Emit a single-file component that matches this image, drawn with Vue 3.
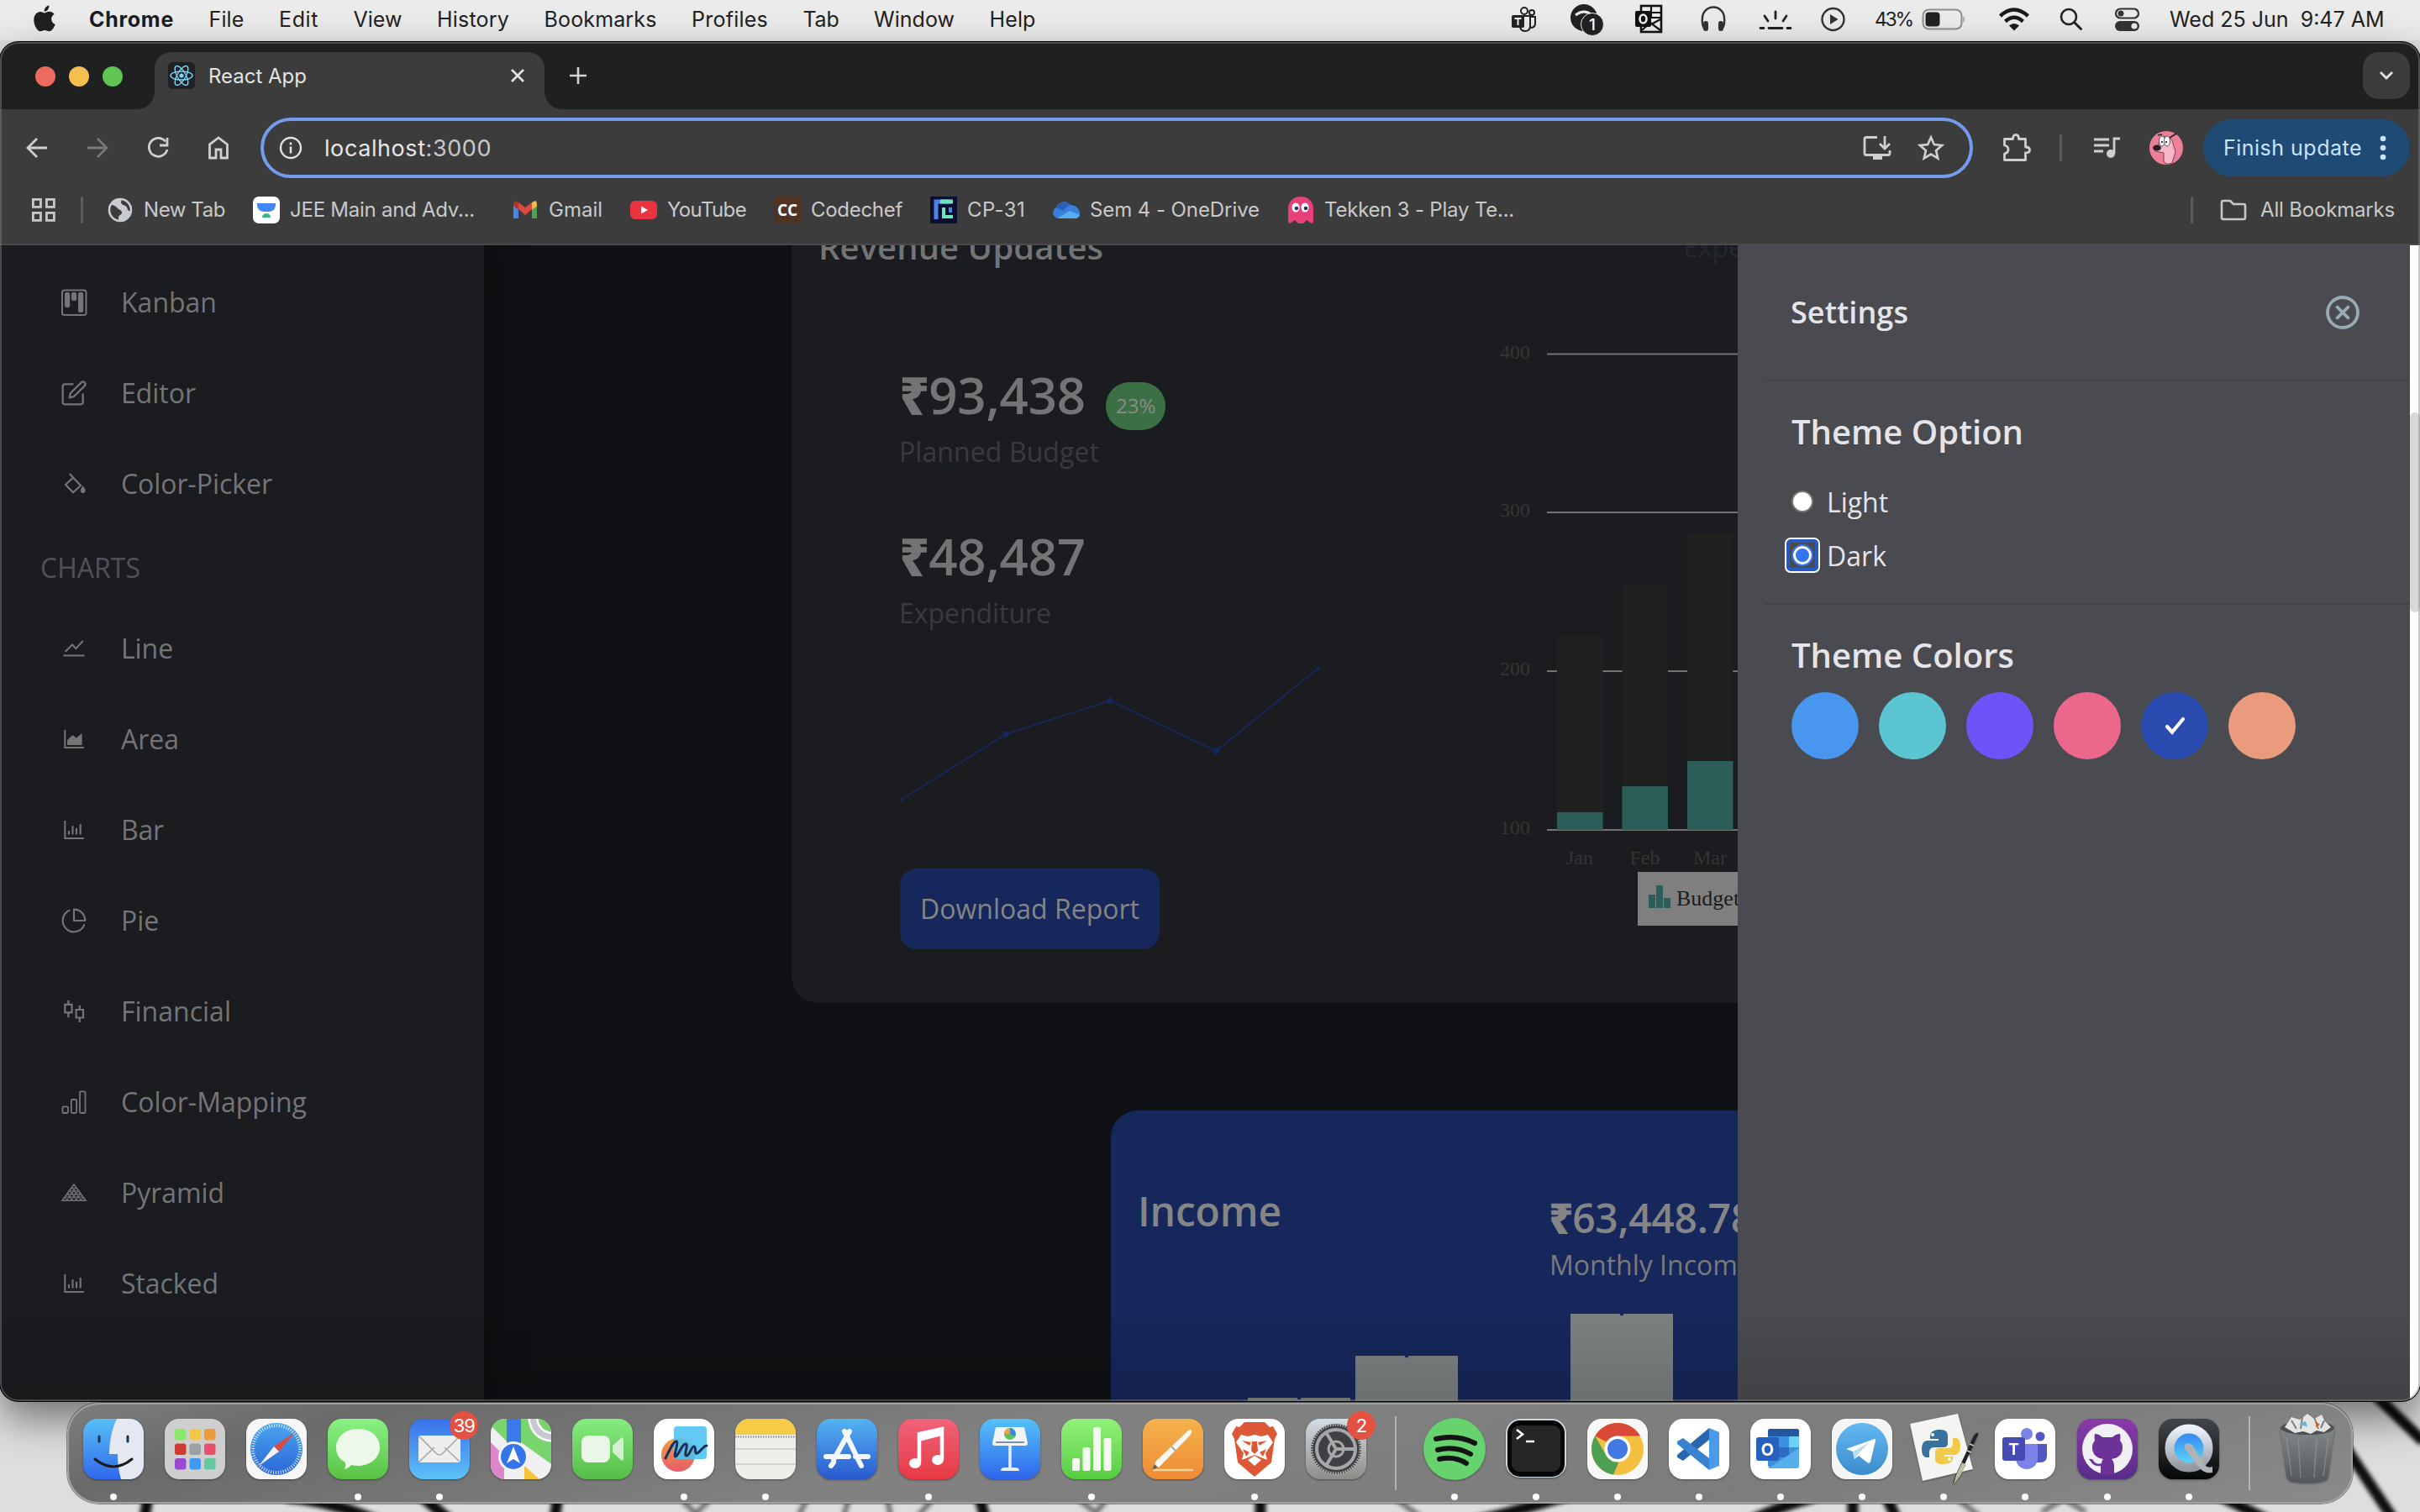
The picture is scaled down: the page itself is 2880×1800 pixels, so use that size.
<script setup>
// Spreads a label over its measured width by adjusting the tracking.
const vFit = {
  mounted(el, { value }) {
    const w = el.getBoundingClientRect().width
    const n = el.textContent.trim().length
    el.style.letterSpacing = (value - w) / n + 'px'
  },
}

const menus = [
  ['File', 42], ['Edit', 47], ['View', 58], ['History', 86], ['Bookmarks', 134],
  ['Profiles', 91], ['Tab', 43], ['Window', 96], ['Help', 55],
]

const bookmarks = [
  { label: 'New Tab', w: 97, icon: '<circle cx="16" cy="16" r="14" fill="#c7cace"/><path d="M5 10c4 0 6 2 8 4s5 2 5 5-4 3-4 6 1 4 0 5C6 29 2 22 2.500 15z" fill="#3c3c3c"/><path d="M19 3c-2 2-3 4-1 6s5 1 6 4 2 5 5 4c1-7-4-13-10-14z" fill="#3c3c3c"/><circle cx="16" cy="16" r="13" fill="none" stroke="#c7cace" stroke-width="2.500"/>' },
  { label: 'JEE Main and Adv...', w: 220, gap: 44, icon: '<rect width="32" height="32" rx="7" fill="#fff"/><path d="M5 8h22v2c0 5-4 8-8 8h-6c-4 0-8-3-8-8z" fill="#4285f4"/><path d="M11 25c0-3 2-5 5-5s5 2 5 5z" fill="#3cba7c"/>' },
  { label: 'Gmail', w: 64, icon: '<path d="M2 8v18h6V13z" fill="#4a86e8"/><path d="M30 8v18h-6V13z" fill="#4fa355"/><path d="M24 7l4-2q2 1 2 4v2l-6 5z" fill="#f2bd42"/><path d="M8 7L4 5Q2 6 2 9v2l6 5z" fill="#b5322a"/><path d="M8 7l8 6 8-6v8l-8 7-8-7z" fill="#dc4a3d"/>' },
  { label: 'YouTube', w: 94, icon: '<rect y="5" width="32" height="22" rx="6" fill="#ea3340"/><path d="M13 11.500v9l8-4.500z" fill="#fff"/>' },
  { label: 'Codechef', w: 109, icon: '<rect width="32" height="32" fill="#4f3324"/><text x="16" y="22.500" text-anchor="middle" font-family="Open Sans, sans-serif" font-weight="700" font-size="19" fill="#fff">CC</text>' },
  { label: 'CP-31', w: 69, icon: '<rect width="32" height="32" fill="#0b0f2e"/><path d="M7 27V6h17" fill="none" stroke="#4a86e8" stroke-width="5"/><path d="M12 6h15" stroke="#6be6c0" stroke-width="5"/><path d="M16 13v11h11" fill="none" stroke="#6be6c0" stroke-width="4"/><path d="M22 13h4v6h-4z" fill="#4a86e8"/>' },
  { label: 'Sem 4 - OneDrive', w: 202, icon: '<path d="M6 26a7 7 0 0 1-2-13C6 7 15 3 21 10c6 0 10 4 11 9s-3 7-5 7z" fill="#3b7fdc"/><path d="M4 13c3-7 13-9 17-3-4 1-7 4-9 7z" fill="#2b5fb5"/><path d="M5 26l15-9 12 5q-2 4-5 4z" fill="#56aef0"/>' },
  { label: 'Tekken 3 - Play Te...', w: 226, icon: '<path d="M1 30V14a15 14 0 0 1 30 0v16q0 3-4 1l-4-3-4 4h-6l-4-4-4 3q-4 2-4-1z" fill="#e8407a"/><ellipse cx="10" cy="13" rx="4.500" ry="5.500" fill="#fff"/><ellipse cx="21" cy="13" rx="4.500" ry="5.500" fill="#fff"/><circle cx="11" cy="14" r="2.300" fill="#25305c"/><circle cx="22" cy="14" r="2.300" fill="#25305c"/>' },
]

const barIcon = '<path d="M5.300 5v21h22.600" stroke-width="2"/><path d="M10 17v4.500M14.500 11.300v10.200M19 14v7.500M23.700 9v12.500" stroke-width="2.100"/>'
const apps = [
  { label: 'Kanban', w: 114, icon: '<rect x="2" y="1.500" width="28.500" height="29.500" rx="2.500" stroke-width="2"/><g fill="currentColor" stroke="none"><rect x="5" y="4" width="6.200" height="18" rx="2"/><rect x="13" y="4" width="6.200" height="10" rx="2"/><rect x="21" y="4" width="6.200" height="24" rx="2"/></g>' },
  { label: 'Editor', w: 89, icon: '<g transform="scale(1.333)" stroke-width="1.700" stroke-linecap="round" stroke-linejoin="round"><path d="M11 4H4a2 2 0 0 0-2 2v14a2 2 0 0 0 2 2h14a2 2 0 0 0 2-2v-7"/><path d="M18.500 2.500a2.121 2.121 0 0 1 3 3L12 15l-4 1 1-4 9.500-9.500z"/></g>' },
  { label: 'Color-Picker', w: 180, icon: '<path d="M11 4l4 4.500L24 18l-9 8.300L6 17l9-8.500" stroke-width="2.200"/><path d="M26.700 18q6 8 0 9.300-6-1.300 0-9.300z" fill="currentColor" stroke="none"/>' },
]
const charts = [
  { label: 'Line', w: 62, icon: '<path d="M5.700 19.800l8.400-8.300 4.200 4.600L26.700 7" stroke-width="2"/><path d="M3.300 24.400h25.400" stroke-width="2"/>' },
  { label: 'Area', w: 69, icon: '<path d="M5.300 5v21h22.600" stroke-width="2"/><path d="M8 23v-6l6.500-6 4.200 3.600L25.600 9v14z" fill="currentColor" stroke="none"/>' },
  { label: 'Bar', w: 51, icon: barIcon },
  { label: 'Pie', w: 45, icon: '<g transform="scale(1.333)" stroke-width="1.600" stroke-linecap="round" stroke-linejoin="round"><path d="M21.210 15.890A10 10 0 1 1 8 2.830"/><path d="M22 12A10 10 0 0 0 12 2v10z"/></g>' },
  { label: 'Financial', w: 131, icon: '<path d="M5.300 7.800h8.200v9.600H5.300zM9.400 2.800v5M9.400 17.400v5.800M18.600 14h8.400v9.500h-8.400zM22.800 9v5M22.800 23.500V29" stroke-width="2.200"/>' },
  { label: 'Color-Mapping', w: 221, icon: '<g stroke-width="1.800"><rect x="2.500" y="21.300" width="6.500" height="7.700" rx="1.500"/><rect x="12.800" y="13" width="6.300" height="16" rx="1.500"/><rect x="23" y="3.300" width="6.500" height="25.700" rx="1.500"/></g>' },
  { label: 'Pyramid', w: 123, icon: '<path d="M16 6L2 25.300h28z" stroke-width="1.600"/><path d="M13 10.500h6M10.500 14h11M8 17.500h16M5.500 21h21M13.500 10l11 15M11 13.500l8.500 11.500M8 17l6 8M5 21l3 4M18.500 10l-11 15M21 13.500L12.500 25M24 17l-6 8M27 21l-3 4" stroke-width="1.200"/>' },
  { label: 'Stacked', w: 116, icon: barIcon },
]

const months = [
  { x: 1853, top: 757.500, green: 967, label: 'Jan' },
  { x: 1930.500, top: 696, green: 936, label: 'Feb' },
  { x: 2008, top: 635, green: 906, label: 'Mar' },
]
const grid = [[400, 421.500], [300, 610], [200, 799], [100, 988]]
const income = [[1485, 1664], [1613, 1614], [1869, 1564]]
const themes = ['#4896ee', '#5cc5d2', '#7053f8', '#eb678c', '#2a4bb0', '#ea9b7e']

const tile = (f) => `<rect width="72" height="72" rx="17" fill="${f}"/>`
const g = (id, a, b) => `<defs><linearGradient id="${id}" x1="0" y1="0" x2="0" y2="1"><stop offset="0" stop-color="${a}"/><stop offset="1" stop-color="${b}"/></linearGradient></defs>`
const pads = ['#8be868', '#f4c648', '#ee9a3a', '#cf3b30', '#9aa0a3', '#e8506a', '#9a4bd0', '#3f9af4', '#64c9a0']
const teeth = '<circle cx="36" cy="36" r="28" fill="none" stroke="#dff0ff" stroke-width="4" stroke-dasharray="1 1.930"/>'

const left = [
  { n: 'finder', dot: 1, i: g('fi', '#58bff5', '#2f68ec') + '<clipPath id="fc"><rect width="72" height="72" rx="17"/></clipPath><g clip-path="url(#fc)"><rect width="72" height="72" fill="url(#fi)"/><path d="M40 0c-6 12-9 28-9 42h10c0 10 1 20 4 30h27V0z" fill="#e4e8f0"/></g><path d="M19 21v6M53 21v6" stroke="#16324f" stroke-width="3" stroke-linecap="round"/><path d="M14 48q22 18 44 0" fill="none" stroke="#1b1b1b" stroke-width="3" stroke-linecap="round"/>' },
  { n: 'launchpad', i: tile('#cfcfd0') + pads.map((c, k) => `<rect x="${12 + (k % 3) * 17.500}" y="${12 + Math.floor(k / 3) * 17.500}" width="13.500" height="13.500" rx="3" fill="${c}"/>`).join('') },
  { n: 'safari', i: g('sa', '#4aa5ee', '#2b65d8') + tile('#f6f6f6') + '<circle cx="36" cy="36" r="31" fill="url(#sa)"/>' + teeth + '<path d="M58 16L39 39l-6-6z" fill="#e04a3c"/><path d="M15 56l18-23 6 6z" fill="#f4f4f4"/>' },
  { n: 'messages', dot: 1, i: g('me', '#8af284', '#58c144') + tile('url(#me)') + '<path d="M36 12c16 0 26 10 26 22S51 56 36 56q-4 0-8-1-3 4-8 5 2-4 1-8C13 48 10 41 10 34c0-12 11-22 26-22z" fill="#eef8ea"/>' },
  { n: 'mail', dot: 1, badge: '39', i: g('ma', '#3a70ea', '#5cc2f8') + tile('url(#ma)') + '<rect x="11" y="20" width="50" height="32" rx="3" fill="#eeeeee"/><path d="M12 51l18-17M60 51L42 34M12 21l20 20q4 4 8 0l20-20" fill="none" stroke="#a9a9a9" stroke-width="1.600"/>' },
  { n: 'maps', i: '<clipPath id="mc"><rect width="72" height="72" rx="17"/></clipPath><g clip-path="url(#mc)"><rect width="72" height="72" fill="#f0f0f2"/><path d="M0 0h20v28L0 8zM36 0h36v54L36 28z" fill="#79d36f"/><path d="M0 28l16 16v28H0z" fill="#dd86cb"/><path d="M40 72V56l18 16z" fill="#f2c53d"/><path d="M50-2q2 22 24 24" fill="none" stroke="#fff" stroke-width="12"/><path d="M50-2q2 22 24 24" fill="none" stroke="#c8c8d0" stroke-width="7"/><path d="M19 0h17v40H19z" fill="#3b78ea"/></g><circle cx="27" cy="45" r="18" fill="#f4f4f6"/><circle cx="27" cy="45" r="15" fill="#3475ea"/><path d="M27 33l8 20-8-5-8 5z" fill="#fff"/>' },
  { n: 'facetime', i: g('ft', '#86ec80', '#56bd47') + tile('url(#ft)') + '<rect x="11" y="20" width="34" height="32" rx="8" fill="#eaf6e6"/><path d="M48 32l10-9q3-2 3 2v22q0 4-3 2l-10-9z" fill="#d6efd0"/>' },
  { n: 'freeform', dot: 1, i: g('fr', '#f0a03c', '#e85c6c') + tile('#fff') + '<circle cx="29" cy="43" r="20" fill="url(#fr)"/><rect x="24" y="9" width="39" height="39" rx="4" fill="#4cc3f0" opacity=".88"/><path d="M14 47c5-10 10-21 13-20s-4 18-1 18 8-16 12-15-3 14 1 14 6-12 9-11 0 10 4 8 7-9 11-9" fill="none" stroke="#15305c" stroke-width="3" stroke-linecap="round"/>' },
  { n: 'notes', dot: 1, i: '<clipPath id="nc"><rect width="72" height="72" rx="17"/></clipPath><g clip-path="url(#nc)"><rect width="72" height="72" fill="#efeeea"/><rect width="72" height="19" fill="#f6cb45"/><path d="M0 21.500h72" stroke="#8c8a84" stroke-width="2" stroke-dasharray="1.500 1.500"/><path d="M0 36h72M0 54h72" stroke="#cbc9c4" stroke-width="1.500"/></g>' },
  { n: 'appstore', i: g('as', '#54b4f2', '#2a58cf') + tile('url(#as)') + '<path d="M39 15L20 49M33 15l20 41M17 56l3-4M11 45h27M46 45h15" stroke="#f4f8fc" stroke-width="6" stroke-linecap="round"/>' },
  { n: 'music', dot: 1, i: g('mu', '#f0637a', '#e63a44') + tile('url(#mu)') + '<path d="M25 52V18l27-6v36" fill="none" stroke="#fff" stroke-width="4.500"/><path d="M25 18l27-6v8l-27 7z" fill="#fff"/><ellipse cx="20" cy="53" rx="7" ry="6" fill="#fff"/><ellipse cx="47" cy="49" rx="7" ry="6" fill="#fff"/>' },
  { n: 'keynote', i: g('ke', '#55c1f8', '#2f66ec') + tile('url(#ke)') + '<path d="M19 10h34l4 19q0 3-3 3H18q-3 0-3-3z" fill="#f3f4f6"/><path d="M19 28h34" stroke="#7a93b0" stroke-width="2"/><circle cx="36" cy="18" r="7" fill="#5cc065"/><path d="M36 11a7 7 0 0 1 6 10l-6-3z" fill="#3f87e0"/><path d="M36 11a7 7 0 0 0-7 7h7z" fill="#f2a23a"/><path d="M36 32v28" stroke="#e7edf4" stroke-width="3.500"/><path d="M25 62q0-4 5-4h12q5 0 5 4z" fill="#e7edf4"/>' },
  { n: 'numbers', dot: 1, i: g('nu', '#92f07a', '#57cc41') + tile('url(#nu)') + '<g fill="#f3fbf0"><rect x="13" y="47" width="9" height="15" rx="2"/><rect x="25.500" y="34" width="9" height="28" rx="2"/><rect x="38" y="10" width="9" height="52" rx="2"/><rect x="50.500" y="23" width="9" height="39" rx="2"/></g>' },
  { n: 'pages', i: g('pa', '#f5b34c', '#ee8a35') + tile('url(#pa)') + '<path d="M12 61h48" stroke="#f9d3a0" stroke-width="2.500"/><path d="M11 61l5-11L52 16q5-5 6-2t-3 7L20 57z" fill="#f6f6f4"/><path d="M11 61l3-7 4 4z" fill="#6b5a48"/><path d="M34 33l5 5" stroke="#a8a39a" stroke-width="2"/>' },
  { n: 'brave', dot: 1, i: tile('#fff') + '<path d="M24 4h24l6 6 4-1 5 9-3 6-4 28-14 12-6 5-6-5-14-12-4-28-3-6 5-9 4 1z" fill="#dc5836"/><path d="M20 19l8 2 8-2 8 2 8-2 6 9-9 13 2 8-15-6-15 6 2-8-9-13z" fill="#fff"/><path d="M21 26l11 2-2 4zM51 26l-11 2 2 4zM33 27h6l1 11-4 4-4-4zM22 36l8 4-4 5zM50 36l-8 4 4 5z" fill="#dc5836"/><path d="M28 49l8-5 8 5-8 7z" fill="#fff"/>' },
  { n: 'settings', badge: '2', i: g('se', '#d4dde4', '#8d8c88') + tile('url(#se)') + '<circle cx="36" cy="36" r="30" fill="#3e4043"/><circle cx="36" cy="36" r="29" fill="none" stroke="#b4b4b4" stroke-width="3" stroke-dasharray="1.500 1.500"/><circle cx="36" cy="36" r="23" fill="none" stroke="#a6a7a8" stroke-width="4"/><circle cx="36" cy="36" r="9" fill="none" stroke="#a6a7a8" stroke-width="3"/><path d="M36 36h23M36 36L24 16M36 36L24 56" stroke="#a6a7a8" stroke-width="4"/>' },
]
const right = [
  { n: 'spotify', i: '<circle cx="36" cy="36" r="37" fill="#66d36e"/><path d="M14 24q25-6 46 5M16 37q21-5 39 5M18 48q18-4 32 5" fill="none" stroke="#141414" stroke-width="6" stroke-linecap="round"/>' },
  { n: 'terminal', i: '<rect width="72" height="70" rx="17" fill="#c9d6dc"/><rect x="2" y="2" width="68" height="67" rx="15" fill="#050505"/><rect x="7" y="8" width="58" height="55" rx="9" fill="#262626"/><path d="M13 13l7 5.500-7 5.500M24 27h10" fill="none" stroke="#fff" stroke-width="2.600"/>' },
  { n: 'chrome', i: tile('#f8f8f8') + '<circle cx="36" cy="36" r="31" fill="#f3bf3e"/><path d="M36 5a31 31 0 0 1 27 15.500H36a15.500 15.500 0 0 0-13 7L9.200 20.500A31 31 0 0 1 36 5z" fill="#d9493a"/><path d="M9.200 20.500L22.600 43.700q5 8.500 15 7.500L31 66.600A31 31 0 0 1 9.200 20.500z" fill="#4c9f53"/><circle cx="36" cy="36" r="15.500" fill="#fff"/><circle cx="36" cy="36" r="12" fill="#4178e2"/>' },
  { n: 'vscode', i: tile('#fff') + '<path d="M48 11l12 5v40l-12 5z" fill="#4b9ae9"/><path d="M48 11v14L17 50l-7-4v-3z" fill="#2a66ad"/><path d="M48 61V47L17 23l-7 4v3z" fill="#3a82cf"/>' },
  { n: 'outlook', i: tile('#fff') + '<rect x="21" y="12" width="37" height="46" rx="3" fill="#3c8fdc"/><path d="M21 15q0-3 3-3h31q3 0 3 3v6H21z" fill="#2557a0"/><path d="M46 21h12v13H46z" fill="#6cd0f7"/><path d="M34 34h12v12H34z" fill="#2e6cc0"/><path d="M21 59l37-24v21q0 3-3 3z" fill="#56aeea"/><rect x="7" y="22" width="27" height="28" rx="3" fill="#2560bd"/><text x="20.500" y="43.500" text-anchor="middle" font-family="Inter, sans-serif" font-weight="700" font-size="20" fill="#fff">O</text>' },
  { n: 'telegram', i: g('te', '#62b8f2', '#3c8ccb') + tile('#f5f5f6') + '<circle cx="36" cy="36" r="31" fill="url(#te)"/><path d="M17 36l34-12q2 0 1 2l-6 25q-1 3-4 1l-10-8-5 4-2-9z" fill="#fff"/><path d="M25 39l20-11-14 14-4 6z" fill="#bcdcf1"/>' },
  { n: 'python', i: '<path d="M-4 6L53-6l18 66L11 74z" fill="#f4f4f2"/><path d="M30 13q11-1 11 7v9q0 5-5 5H25q-6 0-6 6v6h-4q-5-1-5-10t6-10h14v-2H20v-4q0-6 10-7z" fill="#39719f"/><path d="M37 54q-11 1-11-6v-8q0-5 5-5h11q5 0 5-6v-6h4q5 1 5 10t-6 10H37v2h10v3q0 5-10 6z" fill="#f1ca4a"/><circle cx="23" cy="19" r="2" fill="#fff"/><circle cx="43" cy="48" r="2" fill="#fff"/><path d="M77 19q1-3-2-2l-3 3-22 48-3 10 7-8z" fill="#20222c"/><path d="M58 52l-7 15-3 11 7-9 8-14z" fill="#c2bba4"/><path d="M64 38l5 2M67 30l5 2" stroke="#d5cfae" stroke-width="1.500"/>' },
  { n: 'teams', i: tile('#fff') + '<circle cx="38" cy="18" r="7" fill="#7c83e8"/><circle cx="54" cy="21" r="5.500" fill="#5258c0"/><path d="M48 30h14v14q0 8-8 8h-6z" fill="#5258c0"/><path d="M25 30h26v17a13 13 0 0 1-26 0z" fill="#7b83eb"/><rect x="9" y="22" width="27" height="28" rx="3" fill="#474cb4"/><text x="22.500" y="43" text-anchor="middle" font-family="Inter, sans-serif" font-weight="700" font-size="19" fill="#fff">T</text>' },
  { n: 'github', i: g('gi', '#8a3aaa', '#572d88') + tile('url(#gi)') + '<circle cx="36" cy="36" r="30" fill="#f0eff4"/><path d="M28 66V56q-8 1-11-4l-3-4q4-1 6 3 3 4 9 2 0-3 2-5-13-2-13-14 0-5 3-8-1-4 0-8 5 0 9 4h12q4-4 9-4 1 4 0 8 3 3 3 8 0 12-13 14 3 3 3 7v11z" fill="#6d3296"/>' },
  { n: 'quicktime', i: g('qt', '#43474c', '#060606') + g('qb', '#2f7df0', '#5fe0f8') + g('qr', '#eaf0fc', '#94999f') + tile('url(#qt)') + '<circle cx="36" cy="35" r="23" fill="url(#qb)" stroke="url(#qr)" stroke-width="11"/><path d="M32 30q6-2 9 3l14 22q3 4 9 2v7q-9 2-15-5L32 37q-3-4 0-7z" fill="#aeb3b8"/>' },
]
const trash = g('tr', '#84898c', '#54585c') + '<path d="M4 12l7 56q1 6 8 7 17 3 34 0 7-1 8-7l7-56z" fill="url(#tr)" opacity=".95"/><path d="M11 22l6 46M61 22l-6 46M25 24l3 46M47 24l-3 46" stroke="#9da2a5" stroke-width="1.500" opacity=".5"/><ellipse cx="36" cy="11" rx="32" ry="8" fill="#4c5053"/><path d="M9 10l8-12 10 3 9-7 8 6 9-5 4 8 7 7-8 6-9-2-7 4-9-3-10 2z" fill="#e4e4e2"/><path d="M17 2l6 10M30-2l-2 14M44-2l5 14M56 2l-4 9" stroke="#7e7f80" stroke-width="2"/><path d="M26 6l8-3 2 7z" fill="#64b8d0"/><path d="M46 3l5 4-5 3z" fill="#b56a35"/>'
</script>

<template>
  <div class="desktop">
    <svg class="wallpaper" viewBox="0 0 2880 1800" aria-hidden="true">
      <g class="ink">
        <path d="M178 1770l-8 50M340 1782q70 8 120 34M500 1780l36 30M664 1780l-4 30M1165 1780l8 30M1500 1780v30M1750 1812q60-14 130-36M2080 1812q30-16 80-30M2205 1780v30M2244 1780l14 30M2640 1780l60 30M2828 1662l56 54M2792 1724l56 84" stroke="#0d0d0d" stroke-width="13" />
        <path d="M812 1786l16 16 16-16M960 1785l-10 20M1010 1785l-6 20M1056 1785l4 20M1110 1785l-18 20M1284 1785l20 16 16-20M1662 1785l30 22M2330 1785l26 20M2430 1800l26-16 26 16" stroke="#6d6d6d" stroke-width="6" />
      </g>
    </svg>

    <header class="menubar">
      <svg class="apple" viewBox="0 0 26 32"><path d="M18.500.500q.300 3-1.700 5.200T12.600 7.800q-.300-2.800 1.700-5T18.500.500zM13 9.400c1.300 0 3-1.600 5.800-1.600 2.200 0 4.400 1.100 5.700 3.100-5 2.900-4.200 9.900 1.200 12-1.300 3.500-4 8.300-6.900 8.300-2.100 0-2.900-1.300-5.500-1.300s-3.500 1.300-5.500 1.300C4.600 31.200.300 24.300.300 17.700c0-6.400 4-9.800 7.700-9.800 2.400 0 3.800 1.500 5 1.500z" fill="#202020" /></svg>
      <b v-fit="101">Chrome</b>
      <span v-for="m in menus" :key="m[0]" v-fit="m[1]">{{ m[0] }}</span>
      <div class="status">
        <svg width="30" height="34" viewBox="0 0 30 34"><g fill="none" stroke="#222" stroke-width="2"><circle cx="15" cy="7" r="4" /><circle cx="24" cy="9" r="3" /><path d="M14 13h8v12q0 6-6 6-5 0-6-5M22 14h6v8q0 5-6 5" /></g><rect y="12" width="15" height="15" rx="2" fill="#222" /><path d="M3.500 16h8M7.500 16v8" stroke="#eee" stroke-width="2" /></svg>
        <svg width="42" height="38" viewBox="0 0 42 38"><circle cx="16" cy="17" r="16" fill="#222" /><path d="M6 14q10-8 20 0" fill="none" stroke="#ebebeb" stroke-width="3" /><circle cx="26" cy="25" r="13.500" fill="#222" stroke="#ebebeb" stroke-width="1" /><text x="26" y="31.500" text-anchor="middle" class="n1">1</text></svg>
        <svg width="34" height="34" viewBox="0 0 34 34"><rect x="7" y="1" width="24" height="31" fill="#ebebeb" stroke="#111" stroke-width="2.600" /><path d="M19 2v12M30 9H19M30 15H19M8 30l10-9 12 9M30 17l-11 6" fill="none" stroke="#111" stroke-width="2.200" /><rect y="7" width="19" height="19" rx="2" fill="#111" /><ellipse cx="9.500" cy="16.500" rx="4" ry="5" fill="none" stroke="#eee" stroke-width="2.600" /></svg>
        <svg width="30" height="32" viewBox="0 0 30 32"><path d="M4 27Q1 22 2 14.500a13 13 0 0 1 26 0Q29 22 26 27" fill="none" stroke="#333" stroke-width="2.400" /><rect x="3" y="18" width="6" height="12" rx="3" fill="#333" /><rect x="21" y="18" width="6" height="12" rx="3" fill="#333" /></svg>
        <svg width="40" height="32" viewBox="0 0 40 32"><path d="M20 7v8M7 12l4 6M33 12l-4 6M2 26.500h4M12 26.500h16M34 26.500h4" stroke="#222" stroke-width="2.800" stroke-linecap="round" /></svg>
        <svg width="30" height="30" viewBox="0 0 30 30"><circle cx="14.500" cy="15" r="13" fill="none" stroke="#333" stroke-width="2.400" /><path d="M11 9v12l9.500-6z" fill="#333" /></svg>
        <span v-fit="49" class="pct">43%</span>
        <svg width="52" height="26" viewBox="0 0 52 26"><rect x="1.500" y="1.500" width="46" height="23" rx="7" fill="none" stroke="#8f8f8f" stroke-width="2" /><rect x="4.500" y="4.500" width="17" height="17" rx="4" fill="#222" /><path d="M49.500 9q3 4 0 8z" fill="#8f8f8f" /></svg>
        <svg width="38" height="28" viewBox="0 0 38 28"><g fill="none" stroke="#1a1a1a" stroke-width="4.500"><path d="M2.500 10q16-15 33 0M8.500 16.500q10.500-9.500 21 0" /></g><path d="M13 21.500q6-5 12 0l-6 6z" fill="#1a1a1a" /></svg>
        <svg width="28" height="28" viewBox="0 0 28 28"><circle cx="11" cy="11" r="9" fill="none" stroke="#222" stroke-width="2.600" /><path d="M17.500 17.500l8 8" stroke="#222" stroke-width="3" stroke-linecap="round" /></svg>
        <svg width="32" height="28" viewBox="0 0 32 28"><rect x="2" y="1.500" width="27" height="11" rx="5.500" fill="none" stroke="#333" stroke-width="2.200" /><circle cx="8" cy="7" r="3.500" fill="#333" /><rect x="1" y="16" width="29" height="12" rx="6" fill="#333" /><circle cx="24" cy="22" r="3.600" fill="#ebebeb" /></svg>
        <span v-fit="264" class="clock">Wed 25 Jun&nbsp; 9:47 AM</span>
      </div>
    </header>

    <section class="window">
      <div class="tabstrip">
        <div class="lights"><i class="r"></i><i class="y"></i><i class="g"></i></div>
        <div class="tab">
          <svg class="favicon" viewBox="0 0 32 32"><rect width="32" height="32" rx="5" fill="#202124" /><g fill="none" stroke="#7cd6f5" stroke-width="1.400"><ellipse cx="16" cy="16" rx="13" ry="5" /><ellipse cx="16" cy="16" rx="13" ry="5" transform="rotate(60 16 16)" /><ellipse cx="16" cy="16" rx="13" ry="5" transform="rotate(120 16 16)" /></g><circle cx="16" cy="16" r="2.600" fill="#7cd6f5" /></svg>
          <span v-fit="117">React App</span>
          <svg class="close" viewBox="0 0 18 18"><path d="M2 2l14 14M16 2L2 16" stroke="#e2e2e2" stroke-width="2.600" /></svg>
        </div>
        <svg class="plus" viewBox="0 0 22 22"><path d="M11 1v20M1 11h20" stroke="#d2d2d2" stroke-width="2.600" /></svg>
        <div class="drop"><svg width="18" height="12" viewBox="0 0 18 12"><path d="M2 2l7 7 7-7" fill="none" stroke="#e3e3e3" stroke-width="2.800" /></svg></div>
      </div>

      <div class="toolbar">
        <div class="navs">
          <svg viewBox="0 0 32 32"><path d="M28 16H6M16 5L5 16l11 11" fill="none" stroke="#d0d0d0" stroke-width="2.800" /></svg>
          <svg viewBox="0 0 32 32"><path d="M4 16h22M16 5l11 11-11 11" fill="none" stroke="#787878" stroke-width="2.800" /></svg>
          <svg viewBox="0 0 32 32"><path d="M25 8.500A11 11 0 1 0 27 18" fill="none" stroke="#d0d0d0" stroke-width="2.800" /><path d="M27 4v9h-9" fill="none" stroke="#d0d0d0" stroke-width="2.800" /></svg>
          <svg viewBox="0 0 32 32"><path d="M5.500 28V12L16 4l10.500 8v16h-7.500V18h-6v10z" fill="none" stroke="#d0d0d0" stroke-width="2.800" /></svg>
        </div>
        <div class="omnibox">
          <svg width="28" height="28" viewBox="0 0 28 28"><circle cx="14" cy="14" r="12" fill="none" stroke="#e0e0e0" stroke-width="2.400" /><path d="M14 12.500v8M14 7.500v3" stroke="#e0e0e0" stroke-width="2.600" /></svg>
          <span v-fit="199" class="url">localhost<em>:3000</em></span>
          <svg class="end" width="36" height="32" viewBox="0 0 36 32"><path d="M18 3.500H5q-2 0-2 2v17q0 2 2 2h26q2 0 2-2V19M27 2v14M21 11l6 6 6-6" fill="none" stroke="#cfcfcf" stroke-width="2.800" /><path d="M13 25h11v5H13z" fill="#cfcfcf" /></svg>
          <svg width="32" height="32" viewBox="0 0 32 32"><path d="M16 3.500l3.800 8.600 9.300.900-7 6.200 2.100 9.200L16 23.500l-8.200 4.900 2.100-9.200-7-6.200 9.300-.900z" fill="none" stroke="#cfcfcf" stroke-width="2.700" /></svg>
        </div>
        <svg class="ext" viewBox="0 0 36 36"><path d="M3.500 7.500h10q0-5 3.500-5t3.500 5h8v9.500q5 0 5 3.500t-5 3.500v8.500h-25V25q4.500-1 4.500-5t-4.500-5z" fill="none" stroke="#cfcfcf" stroke-width="2.800" stroke-linejoin="round" /></svg>
        <i class="vr"></i>
        <svg class="media" viewBox="0 0 32 26"><path d="M1 3h18M1 10h18M1 17h11M25 20V2h7" fill="none" stroke="#cfcfcf" stroke-width="2.800" /><circle cx="21" cy="20" r="5" fill="#cfcfcf" /></svg>
        <svg class="avatar" viewBox="0 0 40 40"><circle cx="20" cy="20" r="20" fill="#ee7f98" /><path d="M13 9q8-6 14 2l4 14-4 13q-8 3-10-2V26l-10-2q-4-4 3-6z" fill="#f6b6c6" stroke="#7a3f55" stroke-width="1" /><ellipse cx="15" cy="12" rx="3.500" ry="6" fill="#fff" stroke="#333" stroke-width=".800" /><ellipse cx="21" cy="12" rx="3.500" ry="6" fill="#fff" stroke="#333" stroke-width=".800" /><ellipse cx="9" cy="20" rx="5" ry="3.500" fill="#2a1e22" /><circle cx="15" cy="13" r="1" /><circle cx="20" cy="13" r="1" /><path d="M10 5l5-1M24 8l8-5" stroke="#222" stroke-width="1.500" /></svg>
        <div class="update"><span v-fit="165">Finish update</span><svg width="8" height="30" viewBox="0 0 8 30"><g fill="#c9e3fd"><circle cx="4" cy="4" r="3.300" /><circle cx="4" cy="15" r="3.300" /><circle cx="4" cy="26" r="3.300" /></g></svg></div>
      </div>

      <div class="bookmarks">
        <svg class="grid" viewBox="0 0 28 28"><g fill="none" stroke="#c7c7c7" stroke-width="2.800"><rect x="1.400" y="1.400" width="9" height="9" /><rect x="17.400" y="1.400" width="9" height="9" /><rect x="1.400" y="17.400" width="9" height="9" /><rect x="17.400" y="17.400" width="9" height="9" /></g></svg>
        <i class="vr"></i>
        <div v-for="b in bookmarks" :key="b.label" class="bm" :class="{ wide: b.gap }">
          <svg viewBox="0 0 32 32" v-html="b.icon"></svg>
          <span v-fit="b.w">{{ b.label }}</span>
        </div>
        <i class="vr last"></i>
        <svg class="folder" viewBox="0 0 32 26"><path d="M2 4q0-2 2-2h8l4 4h12q2 0 2 2v14q0 2-2 2H4q-2 0-2-2z" fill="none" stroke="#c7c7c7" stroke-width="2.600" /></svg>
        <span v-fit="160">All Bookmarks</span>
      </div>

      <div class="page">
        <nav class="side">
          <a v-for="n in apps" :key="n.label"><svg viewBox="0 0 32 32" v-html="n.icon"></svg><span v-fit="n.w">{{ n.label }}</span></a>
          <h4><span v-fit="119">CHARTS</span></h4>
          <a v-for="n in charts" :key="n.label"><svg viewBox="0 0 32 32" v-html="n.icon"></svg><span v-fit="n.w">{{ n.label }}</span></a>
        </nav>

        <main>
          <section class="revenue">
            <div class="head"><h2><span v-fit="339">Revenue Updates</span></h2><p>Expenditure</p></div>
            <div class="body">
              <div class="figures">
                <div class="amount"><strong v-fit="221"><u>₹</u>93,438</strong><span class="chip">23%</span></div>
                <p><span v-fit="238">Planned Budget</span></p>
                <div class="amount second"><strong v-fit="221"><u>₹</u>48,487</strong></div>
                <p><span v-fit="181">Expenditure</span></p>
                <svg class="spark" width="520" height="200" viewBox="1071 772 520 200"><path d="M1072 952.500L1197 874l124-40 126 60 122-98.500" fill="none" stroke="#16275b" stroke-width="2" /><g fill="#16275b"><circle cx="1073" cy="952" r="2" /><circle cx="1197" cy="874" r="3.700" /><circle cx="1321" cy="834" r="3.700" /><circle cx="1447" cy="894" r="3.700" /><circle cx="1569" cy="795.500" r="2" /></g></svg>
                <button><span v-fit="261">Download Report</span></button>
              </div>
              <svg class="stack" width="414" height="730" viewBox="1654 400 414 730">
                <g v-for="l in grid" :key="l[0]">
                  <path :d="`M1841 ${l[1]}H2070`" stroke="#747474" stroke-width="2" />
                  <text x="1821" :y="l[1] + 5" text-anchor="end" class="ax">{{ l[0] }}</text>
                </g>
                <g v-for="m in months" :key="m.label">
                  <rect :x="m.x" :y="m.top" width="54.500" :height="987.500 - m.top" fill="#20201f" />
                  <rect :x="m.x" :y="m.green" width="54.500" :height="987.500 - m.green" fill="#2b5e59" />
                  <text :x="m.x + 27" y="1029" text-anchor="middle" class="ax">{{ m.label }}</text>
                </g>
                <rect x="1949" y="1038" width="121" height="64" fill="#7f7f7f" />
                <path d="M1962 1065h8v16h-8zM1971 1054h8v27h-8zM1980 1069h8v12h-8z" fill="#2b5e59" />
                <text x="1995" y="1078" class="lg">Budget</text>
              </svg>
            </div>
          </section>

          <section class="income">
            <div class="top">
              <h2><span v-fit="171">Income</span></h2>
              <div><strong><u>₹</u>63,448.78</strong><p>Monthly Income</p></div>
            </div>
            <svg width="746" height="110" viewBox="1322 1558 746 110">
              <g v-for="b in income" :key="b[0]">
                <rect :x="b[0]" :y="b[1]" width="122" height="120" fill="#7b8080" />
                <circle :cx="b[0] + 61" :cy="b[1]" r="2.400" fill="#16275b" />
              </g>
            </svg>
          </section>
        </main>

        <aside class="drawer">
          <div class="dhead"><h3><span v-fit="140">Settings</span></h3><svg width="42" height="42" viewBox="0 0 42 42"><circle cx="21" cy="21" r="18" fill="none" stroke="#99abb4" stroke-width="3.800" /><path d="M13.500 13.500l15 15M28.500 13.500l-15 15" stroke="#99abb4" stroke-width="3.800" /></svg></div>
          <div class="group">
            <h3 class="lgt"><span v-fit="276">Theme Option</span></h3>
            <label><i class="radio"></i><span v-fit="73">Light</span></label>
            <label><i class="radio on"></i><span v-fit="71">Dark</span></label>
          </div>
          <div class="group colors">
            <h3 class="lgt"><span v-fit="265">Theme Colors</span></h3>
            <div class="swatches">
              <i v-for="(c, k) in themes" :key="c" :style="{ background: c }"><svg v-if="k === 4" width="28" height="24" viewBox="0 0 28 24"><path d="M5 13l6 6.500L24 4" fill="none" stroke="#fff" stroke-width="4.200" stroke-linecap="round" /></svg></i>
            </div>
          </div>
        </aside>
        <div class="scroll"><i></i></div>
        <div class="fade"></div>
      </div>
    </section>

    <footer class="dock">
      <div v-for="d in left" :key="d.n" class="app" :class="{ run: d.dot }">
        <svg viewBox="0 0 72 72" v-html="d.i"></svg><b v-if="d.badge">{{ d.badge }}</b>
      </div>
      <i class="bar"></i>
      <div v-for="d in right" :key="d.n" class="app run"><svg viewBox="0 0 72 72" v-html="d.i"></svg></div>
      <i class="bar"></i>
      <div class="app bin"><svg viewBox="0 0 72 72" v-html="trash"></svg></div>
    </footer>
  </div>
</template>

<style>
body { margin: 0; background: #e2e2e2; }
</style>

<style scoped>
.desktop { position: relative; width: 2880px; height: 1800px; overflow: hidden; background: #dedede; font-family: Inter, "Liberation Sans", sans-serif; display: flex; flex-direction: column; }
.desktop * { box-sizing: border-box; }
svg { display: block; overflow: visible; flex: none; }
span, b, strong { white-space: nowrap; }
i, em { font-style: normal; }
u { text-decoration: none; font-weight: 700; -webkit-text-stroke: 2px currentColor; }
h2, h3, h4, p { margin: 0; }
.wallpaper { position: absolute; inset: 0; }
.ink { fill: none; filter: blur(2.500px); }

.menubar { height: 48px; flex: none; background: #ebebeb; display: flex; align-items: center; gap: 41.500px; padding: 0 36px 2px 40px; font-size: 25px; color: #222; position: relative; }
.apple { width: 26px; height: 32px; margin-right: -1.500px; margin-top: -2px; }
.menubar b { font-weight: 700; color: #1c1c1c; }
.status { margin-left: auto; display: grid; align-items: center; grid-template-columns: 70px 77px 78px 69px 74px 64px 56px 91px 73px 65px 66px 264px; margin-right: -2px; }
.pct { font-size: 23px; }
.n1 { font: 500 19px Inter, sans-serif; fill: #fff; }

.window { position: relative; height: 1618px; margin-top: 2px; flex: none; border-radius: 22px; overflow: hidden; background: #3c3c3c; display: flex; flex-direction: column; box-shadow: 0 0 0 1px #000, 0 20px 50px rgba(0, 0, 0, .5); }
.window::after { content: ""; position: absolute; inset: 0; border: 2px solid rgba(130, 130, 130, .45); border-radius: 22px; pointer-events: none; }
.tabstrip { height: 80px; flex: none; background: #1f2120; display: flex; align-items: flex-start; padding: 12px 12px 0 42px; }
.lights { display: flex; gap: 16px; padding-top: 17px; width: 142px; flex: none; }
.lights i { width: 24px; height: 24px; border-radius: 50%; }
.r { background: #ed6a5e; }
.y { background: #f5bf4f; }
.g { background: #61c554; }
.tab { position: relative; width: 464px; height: 68px; background: #3c3c3c; border-radius: 20px 20px 0 0; display: flex; align-items: center; padding: 0 23px 12px 16px; font-size: 24px; color: #e3e3e3; }
.tab::before, .tab::after { content: ""; position: absolute; bottom: 0; width: 20px; height: 20px; }
.tab::before { left: -20px; background: radial-gradient(circle at 0 0, transparent 19.500px, #3c3c3c 20px); }
.tab::after { right: -20px; background: radial-gradient(circle at 100% 0, transparent 19.500px, #3c3c3c 20px); }
.favicon { width: 32px; height: 32px; margin-right: 16px; }
.close { width: 18px; height: 18px; margin-left: auto; }
.plus { width: 22px; height: 22px; margin: 17px 0 0 29px; }
.drop { margin-left: auto; width: 56px; height: 56px; border-radius: 19px; background: #3c3c3c; display: grid; place-items: center; }

.toolbar { height: 92px; flex: none; display: flex; align-items: center; padding: 0 12px 0 28px; }
.navs { display: flex; gap: 40px; width: 282px; flex: none; }
.navs svg { width: 32px; height: 32px; }
.omnibox { width: 2038px; height: 72px; flex: none; border: 4px solid #739cef; border-radius: 36px; display: flex; align-items: center; padding: 0 30px 0 18px; background: #3c3c3c; }
.url { margin-left: 26px; font-size: 27px; color: #e6e6e6; }
.url em { color: #c9c9c9; }
.omnibox .end { margin-left: auto; margin-right: 30px; }
.ext { width: 36px; height: 36px; margin-left: 34px; }
.vr { width: 3px; height: 32px; border-radius: 2px; background: #5c5c5c; flex: none; }
.toolbar .vr { margin-left: 33px; }
.media { width: 32px; height: 26px; margin-left: 37px; }
.avatar { width: 40px; height: 40px; margin-left: 35px; }
.update { margin-left: auto; width: 246px; height: 68px; border-radius: 34px; background: #1f4a74; color: #c9e3fd; display: flex; align-items: center; justify-content: space-between; padding: 0 28px 0 24px; font-size: 25px; }

.bookmarks { height: 70px; flex: none; display: flex; align-items: center; padding: 0 30px 13px 38px; font-size: 24px; color: #c9c9c9; border-bottom: 2px solid #4a4a4a; }
.bookmarks .grid { width: 28px; height: 28px; }
.bookmarks .vr { margin: 0 28px 0 30px; }
.bm { display: flex; align-items: center; gap: 12px; margin-right: 33px; }
.bm.wide { margin-right: 44px; }
.bm svg { width: 32px; height: 32px; }
.bookmarks .vr.last { margin: 0 32px 0 auto; }
.folder { width: 32px; height: 26px; margin-right: 16px; }

.page { position: relative; flex: 1; min-height: 0; display: flex; background: #101114; font-family: "Open Sans", "Noto Sans", sans-serif; overflow: hidden; }
.side { position: relative; width: 576px; flex: none; background: #1b1c1f; padding-top: 14px; color: #747577; font-size: 32px; box-shadow: 0 0 48px rgba(0, 0, 0, .35); }
.side a { display: flex; align-items: center; height: 108px; padding-left: 72px; gap: 40px; line-height: 48px; }
.side svg { width: 32px; height: 32px; fill: none; stroke: currentColor; }
.side h4 { font-weight: 400; height: 88px; padding: 22px 0 0 48px; line-height: 48px; color: #505158; }
main { flex: 1; min-width: 0; display: flex; flex-direction: column; }
.revenue { margin-left: 366px; height: 902px; flex: none; background: #1b1c1f; border-radius: 0 0 32px 32px; overflow: hidden; display: flex; flex-direction: column; color: #737476; }
.head { height: 142px; flex: none; display: flex; padding-left: 32px; }
.head h2 { font-size: 40px; line-height: 56px; font-weight: 600; margin-top: -26px; width: 1029px; }
.head p { font-size: 32px; line-height: 48px; margin-top: -22px; color: #23282f; }
.body { display: flex; align-items: flex-start; }
.figures { width: 712px; height: 696px; padding-left: 129px; border-right: 2px solid #18191c; display: flex; flex-direction: column; align-items: flex-start; flex: none; }
.amount { display: flex; height: 72px; align-items: flex-start; gap: 24px; }
.amount strong { font-size: 60px; line-height: 72px; font-weight: 600; }
.amount.second { margin-top: 64px; }
.chip { margin-top: 21px; height: 57px; padding: 12px; line-height: 32px; font-size: 24px; border-radius: 28px; background: #3b7044; color: #8c8b88; }
.figures p { margin-top: 8px; height: 48px; font-size: 32px; line-height: 48px; color: #393a40; margin-left: -1px; }
.spark { margin-top: 18px; }
button { margin-top: auto; width: 309px; height: 96px; border: 0; border-radius: 20px; background: #16275b; color: #858585; font: 400 32px/48px "Open Sans", sans-serif; padding: 0; }
.stack { margin-top: -34px; }
.ax { font: 24px "Liberation Serif", serif; fill: #343534; }
.lg { font: 26px "Liberation Serif", serif; fill: #1c1c1c; }
.income { margin-left: 746px; margin-top: 128px; height: 360px; flex: none; background: #16275b; border-radius: 32px 0 0 0; color: #858585; }
.top { height: 236px; padding-left: 32px; display: flex; }
.top h2 { font-size: 48px; line-height: 72px; font-weight: 600; padding-top: 84px; width: 490px; }
.top strong { display: block; margin-top: 92px; font-size: 48px; line-height: 72px; font-weight: 600; letter-spacing: -.300px; }
.top p { font-size: 32px; line-height: 48px; margin-top: -4px; color: #7a7a7a; white-space: nowrap; }

.drawer { position: absolute; left: 2068px; top: 0; width: 800px; bottom: 0; background: #4a4b50; color: #e5e5e9; }
.drawer h3 { font-weight: 600; font-size: 36px; line-height: 56px; }
.drawer h3.lgt { font-size: 40px; }
.dhead { height: 160px; padding: 0 59px 0 63px; display: flex; align-items: center; justify-content: space-between; }
.group { margin-left: 32px; padding: 32px 0 0 32px; border-top: 2px solid #424347; height: 266px; display: flex; flex-direction: column; }
.group label { display: flex; align-items: center; height: 48px; margin-bottom: 16px; gap: 16px; font-size: 32px; line-height: 48px; }
.group h3 + label { margin-top: 32px; }
.group h3 { height: 56px; flex: none; }
.radio { width: 26px; height: 26px; flex: none; border-radius: 50%; background: #fff; border: 2px solid #767676; position: relative; top: -1px; }
.radio.on { border: 2px solid #3574f0; box-shadow: inset 0 0 0 3px #fff; background: #3574f0; }
.radio.on::after { content: ""; position: absolute; inset: -10px; border: 2px solid #fff; border-radius: 7px; box-shadow: inset 0 0 0 4px #2559c4; }
.swatches { display: flex; gap: 24px; margin-top: 16px; }
.swatches i { width: 80px; height: 80px; border-radius: 50%; display: grid; place-items: center; }
.scroll { position: absolute; right: 0; top: 0; bottom: 0; width: 12px; background: #fff; }
.scroll i { display: block; margin-top: 199px; height: 238px; border-radius: 6px; background: #d8d8d8; }
.fade { position: absolute; left: 0; right: 12px; bottom: 0; height: 110px; background: linear-gradient(transparent, rgba(0, 0, 0, .13)); }

.dock { position: relative; margin: 2px 80px 0; height: 120px; width: 2720px; border-radius: 38px; background: linear-gradient(165deg, #7d7d7d 0, #6a6a6a 12%, #818181 40%, #7c7c7c 75%, #8a8a8a); border: 2px solid #a0a0a0; box-shadow: 0 0 0 1px rgba(0, 0, 0, .4); display: flex; padding-left: 4px; }
.app { position: relative; width: 97.070px; flex: none; padding: 17px 0 0 12.500px; }
.app svg { width: 72px; height: 72px; filter: drop-shadow(0 1px 1px rgba(0, 0, 0, .4)); }
.app b { position: absolute; left: 61px; top: 8px; width: 34px; height: 34px; border-radius: 17px; background: #e25142; color: #fff; font-weight: 400; font-size: 22px; line-height: 34px; text-align: center; letter-spacing: -1px; }
.app.run::after { content: ""; position: absolute; left: 44.500px; top: 106px; width: 8px; height: 8px; border-radius: 50%; background: #fff; }
.bar { width: 2px; height: 88px; margin: 14px 20.500px 0 21px; background: #b4b4b4; flex: none; }
.app + .bar ~ .app + .bar { margin-left: 23px; margin-right: 19px; }
</style>
